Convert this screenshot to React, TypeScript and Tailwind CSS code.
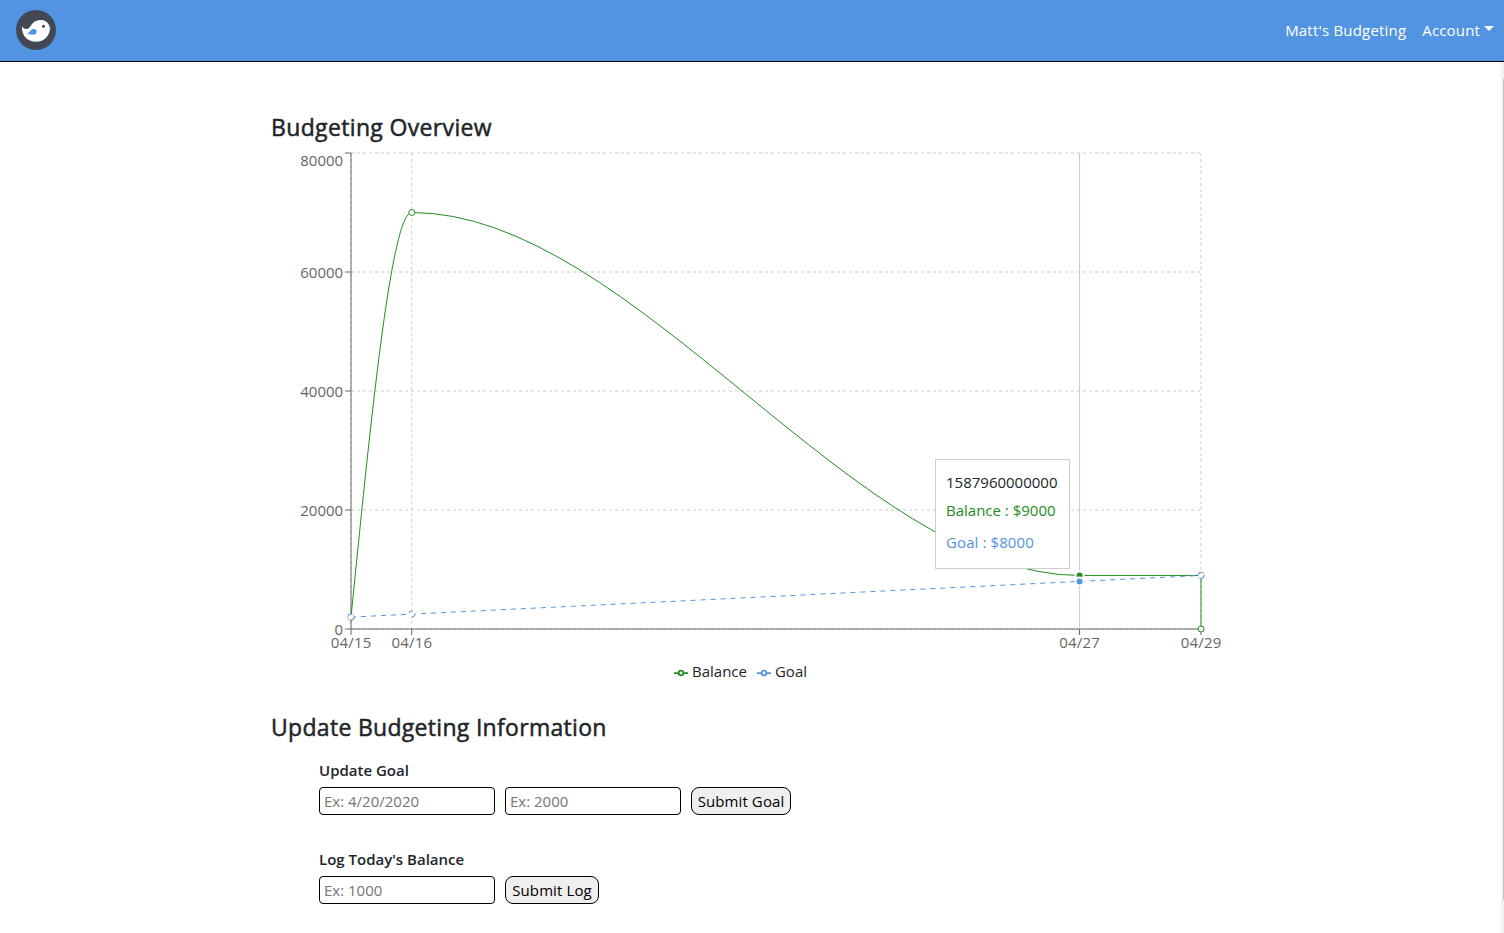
import React from "react";

const X0 = 351;
const X1 = 1201;
const Y0 = 153;
const Y1 = 629;
const px = (day: number) => X0 + ((day - 15) * (X1 - X0)) / 14;
const py = (value: number) => Y1 - (value * (Y1 - Y0)) / 80000;

const GREEN = "#228b22";
const BLUE = "#5294e2";

const yTicks = [0, 20000, 40000, 60000, 80000];
const xTicks = [15, 16, 27, 29];
const balance = [
  [15, 2000],
  [16, 70000],
  [29, 9000],
  [29, 0],
];
const goal = [
  [15, 2000],
  [16, 2500],
  [29, 9000],
];

function Logo() {
  return (
    <svg width="40" height="40" viewBox="0 0 40 40" className="block">
      <circle cx="20" cy="20" r="20" fill="#434855" />
      <path d="M33.4 17.4 L35.8 18.5 L33.4 19.6 Z" fill={BLUE} />
      <path
        d="M6.1 16.3 C7.3 18.6 9.8 19.9 12.1 18.5 C14.4 17.2 15.6 13.6 18.3 11.7 C20.3 10.4 22.8 9.9 25.3 9.9 C30.1 10.1 33.9 13.9 33.9 18.6 C33.9 25.7 28.3 31.8 20 31.8 C11.4 31.8 5.2 25.4 6.1 16.3 Z"
        fill="#fff"
      />
      <path d="M20.6 21.3 C20.8 24.3 18.6 25 16 24.5 C14 24.1 13 24.3 10.9 23.4 C13.7 23 13.4 20.6 16 19.4 C18.4 18.5 20.4 19.4 20.6 21.3 Z" fill={BLUE} />
      <circle cx="27.5" cy="16.2" r="1.5" fill="#434855" />
    </svg>
  );
}

function Chart() {
  const a = px(15);
  const b = px(16);
  const c = px(27);
  const third = (b - a) / 3;
  const slope = (1.5 * (py(70000) - py(2000))) / (b - a);
  const curve = `M${a},${py(2000)} C${a + third},${py(2000) + slope * third} ${b - third},${py(70000)} ${b},${py(70000)} C${b + (c - b) / 3},${py(70000)} ${c - (c - b) / 3},${py(9000)} ${c},${py(9000)} L${px(29)},${py(9000)} L${px(29)},${py(0)}`;
  const goalLine = `M${a},${py(2000)} L${b},${py(2500)} L${c},${py(8000)} L${px(29)},${py(9000)}`;
  return (
    <svg width="960" height="512" viewBox="271 148 960 512" className="block" fontFamily="'Open Sans', 'Noto Sans', sans-serif" fontSize="15">
      <g stroke="#ccc" strokeDasharray="3 3">
        {yTicks.map((v) => (
          <line key={v} x1={X0} x2={X1} y1={py(v)} y2={py(v)} />
        ))}
        {xTicks.map((d) => (
          <line key={d} x1={px(d)} x2={px(d)} y1={Y0} y2={Y1} />
        ))}
      </g>
      <g stroke="#666">
        <line x1={X0} x2={X1} y1={Y1} y2={Y1} />
        <line x1={X0} x2={X0} y1={Y0} y2={Y1} />
        {yTicks.map((v) => (
          <line key={v} x1={X0 - 6} x2={X0} y1={py(v)} y2={py(v)} />
        ))}
        {xTicks.map((d) => (
          <line key={d} x1={px(d)} x2={px(d)} y1={Y1} y2={Y1 + 6} />
        ))}
      </g>
      <g fill="#666">
        {yTicks.map((v) => (
          <text key={v} x="343.2" y={(v === 80000 ? 160 : py(v)) + 5.7} textAnchor="end">
            {v}
          </text>
        ))}
        {xTicks.map((d) => (
          <text key={d} x={px(d)} y="648" textAnchor="middle" textLength="40.5">
            {`04/${d}`}
          </text>
        ))}
      </g>
      <line x1={c} x2={c} y1={Y0} y2={Y1} stroke="#ccc" />
      <path d={curve} fill="none" stroke={GREEN} />
      <g fill="#fff" stroke={GREEN}>
        {balance.map(([d, v], i) => (
          <circle key={i} cx={px(d)} cy={py(v)} r="3" />
        ))}
      </g>
      <path d={goalLine} fill="none" stroke={BLUE} strokeDasharray="5 5" />
      <g fill="#fff" stroke={BLUE} strokeDasharray="5 5">
        {goal.map(([d, v], i) => (
          <circle key={i} cx={px(d)} cy={py(v)} r="3" />
        ))}
      </g>
      <circle cx={c} cy={py(9000)} r="4" fill={GREEN} stroke="#fff" strokeWidth="2" />
      <circle cx={c} cy={py(8000)} r="4" fill={BLUE} stroke="#fff" strokeWidth="2" />
    </svg>
  );
}

function LegendItem({ color, label }: { color: string; label: string }) {
  return (
    <div className="flex items-center gap-1">
      <svg width="14" height="14" viewBox="0 0 32 32" className="mt-[3px]">
        <path
          d="M0,16h10.667A5.333,5.333,0,1,1,21.333,16H32M21.333,16A5.333,5.333,0,1,1,10.667,16"
          fill="none"
          stroke={color}
          strokeWidth="4"
        />
      </svg>
      <span>{label}</span>
    </div>
  );
}

const inputClass =
  "h-7 w-44 rounded-[4px] border border-black bg-white pl-1 pr-1 text-[15px] placeholder:text-[#757575] outline-none";
const buttonClass =
  "h-7 rounded-[8px] border border-black bg-[#efefef] text-center text-[15px] tracking-[0.1px] whitespace-nowrap text-black";
const headingClass = "text-[23px] leading-9 font-normal whitespace-nowrap [-webkit-text-stroke:0.5px_#212529]";

export default function App() {
  return (
    <div className="flex h-[933px] flex-col overflow-hidden bg-white font-['Open_Sans','Noto_Sans',sans-serif] text-[15px] text-[#212529]">
      <header className="flex h-[62px] shrink-0 items-center justify-between border-b border-black bg-[#5294e2] pr-[10px] pb-px pl-4 text-white">
        <Logo />
        <nav className="flex items-center gap-4">
          <a className="tracking-[0.2px] whitespace-nowrap">Matt's Budgeting</a>
          <a className="flex items-center gap-1 tracking-[0.15px] whitespace-nowrap">
            Account
            <span className="-mt-[3px] border-x-[5px] border-t-[5px] border-x-transparent border-t-white" />
          </a>
        </nav>
      </header>
      <div className="flex flex-1">
        <main className="ml-[271px] w-[960px] pt-[47px]">
          <h2 className={`${headingClass} h-[39px] tracking-[0.35px]`}>Budgeting Overview</h2>
          <section className="relative">
            <Chart />
            <div className="-mt-px flex h-6 items-center justify-center gap-[10px] pr-[21px] text-[#212529]">
              <LegendItem color={GREEN} label="Balance" />
              <LegendItem color={BLUE} label="Goal" />
            </div>
            <div className="absolute top-[311px] left-[664px] h-[110px] w-[135px] border border-[#ccc] bg-white px-[10px] pt-[10px] whitespace-nowrap">
              <p className="leading-6">1587960000000</p>
              <p className="mt-1 leading-6 text-[#228b22]">Balance : $9000</p>
              <p className="mt-2 leading-6 tracking-[0.1px] text-[#5294e2]">Goal : $8000</p>
            </div>
          </section>
          <h2 className={`${headingClass} mt-[26px] h-9 tracking-[0.3px]`}>Update Budgeting Information</h2>
          <form className="mt-[13px] pl-12">
            <h3 className="mb-[5px] leading-6 font-semibold">Update Goal</h3>
            <div className="flex gap-[10px]">
              <input className={inputClass} placeholder="Ex: 4/20/2020" />
              <input className={inputClass} placeholder="Ex: 2000" />
              <button type="button" className={`${buttonClass} w-[100px]`}>Submit Goal</button>
            </div>
            <h3 className="mt-8 mb-[5px] leading-6 font-semibold">Log Today's Balance</h3>
            <div className="flex gap-[10px]">
              <input className={inputClass} placeholder="Ex: 1000" />
              <button type="button" className={`${buttonClass} w-[94px]`}>Submit Log</button>
            </div>
          </form>
        </main>
        <div className="ml-auto flex w-[3px] justify-end bg-[#f1f1f1] pt-[17px]">
          <div className="h-[821px] w-px bg-[#c1c1c1]" />
        </div>
      </div>
    </div>
  );
}
